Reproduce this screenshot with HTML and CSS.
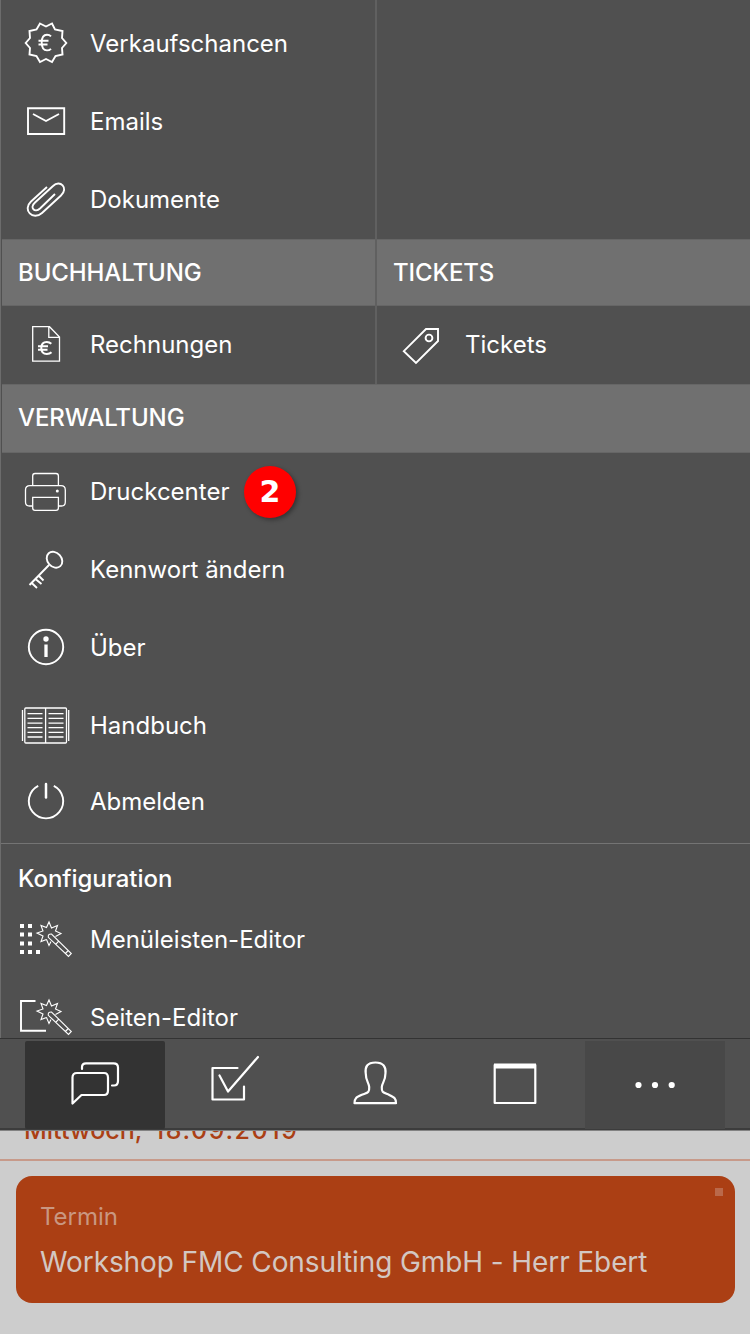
FILE: index.html
```html
<!DOCTYPE html>
<html lang="de">
<head>
<meta charset="utf-8">
<title>Menü</title>
<link rel="stylesheet" href="styles.css">
</head>
<body>
<div class="screen">
<main class="menu">
  <section class="columns top">
    <div class="column">
      <a class="row"><svg class="icon" viewBox="0 5 76 78"><path d="M40 23.5 L46 26.5 L52 23.5 L55 29.5 L62.5 31 L62 38 L66.300 43 L62 48 L62.500 54.500 L55.500 56 L52 62 L46 59 L40 62 L36.500 56 L29.500 54.500 L30 48 L25.700 43 L30 38 L29.500 31 L36.500 29.500Z"/><path d="M51 36.300C49.800 35 48.500 34.700 47 34.700C43.500 34.700 41.700 38 41.700 42.600C41.700 47.200 43.500 50.400 47 50.400C48.500 50.400 49.800 50 51 48.800M38.500 40.700H48.500M38.500 44.500H47.500"/></svg><span class="label">Verkaufschancen</span></a>
      <a class="row"><svg class="icon" viewBox="0 83 76 78"><path d="M28 108.300H64.200V134H28ZM33 114L46 121L59 114"/></svg><span class="label">Emails</span></a>
      <a class="row"><svg class="icon" viewBox="0 161 76 78"><path d="M47 187L31 201.500C22 210 33 221 42 213L61 195.500C69 188 60 179 53 186L35 202.500C29 208 35 213 40 208.500L55 194"/></svg><span class="label">Dokumente</span></a>
    </div>
    <div class="column"></div>
  </section>
  <section class="columns">
    <div class="column">
      <h2 class="heading">BUCHHALTUNG</h2>
      <a class="row"><svg class="icon thin" viewBox="0 306 76 78"><path d="M32.700 326.700H49.500L59.500 337V361.200H32.700ZM48.800 327V337.300H59"/><path class="bold" d="M51.300 343.800C50 342.500 48.500 342 46.800 342C43.300 342 41.300 344.500 41.300 348C41.300 351.500 43.300 354 46.800 354C48.500 354 50.200 353.600 51.500 352.300M38 346.200H48M38 349.700H47.500"/></svg><span class="label">Rechnungen</span></a>
    </div>
    <div class="column">
      <h2 class="heading">TICKETS</h2>
      <a class="row"><svg class="icon" viewBox="375 306 76 78"><path d="M426 329H438V341L416 363L403.800 351.200Z"/><circle cx="429" cy="338" r="3.400"/></svg><span class="label">Tickets</span></a>
    </div>
  </section>
  <section class="admin">
    <h2 class="heading">VERWALTUNG</h2>
    <a class="row"><svg class="icon thin" viewBox="0 453 76 78"><path d="M32.700 485.500V476Q32.700 473.500 35 473.500H56Q58.400 473.500 58.400 476V485.500M32 506H29.500Q25.500 506 25.500 502V490Q25.500 485.700 30 485.700H61Q65.300 485.700 65.300 490V502Q65.300 506 61.500 506H58.500M32.700 497.300H58.400V508Q58.400 510.400 56 510.400H35Q32.700 510.400 32.700 508Z"/><circle class="fill" cx="57.300" cy="491" r="1.500"/></svg><span class="label druck">Druckcenter</span><span class="step">2</span></a>
    <a class="row"><svg class="icon" viewBox="0 531 76 78"><ellipse cx="54.500" cy="559.700" rx="7" ry="8.700" transform="rotate(-42 54.500 559.700)"/><path d="M49 565L29.500 585M31.500 582.800L37 588M35.500 579L41.500 584M38.500 575.500L43.500 580.500"/></svg><span class="label">Kennwort ändern</span></a>
    <a class="row"><svg class="icon" viewBox="0 609 76 78"><circle cx="46" cy="647" r="17.200"/><circle class="fill" cx="46" cy="639" r="2.700"/><path class="heavy" d="M46 644.500V657"/></svg><span class="label">Über</span></a>
    <a class="row"><svg class="icon thin" viewBox="0 687 76 78"><path d="M22.500 710V741M68.700 710V741"/><rect x="24.800" y="708" width="41.700" height="35" rx="1"/><path d="M45.600 708V743M27.500 713.700H42.500M27.500 718.300H42.500M27.500 723.200H42.500M27.500 727.700H42.500M27.500 732.300H42.500M27.500 737H42.500M48.500 713.700H63.500M48.500 718.300H63.500M48.500 723.200H63.500M48.500 727.700H63.500M48.500 732.300H63.500M48.500 737H63.500"/></svg><span class="label">Handbuch</span></a>
    <a class="row"><svg class="icon" viewBox="0 764 76 78"><path d="M38.200 786.800A17.200 17.200 0 1 0 53.800 786.800"/><path class="medium" d="M46 785V798.500"/></svg><span class="label">Abmelden</span></a>
  </section>
  <section class="config">
    <h3 class="subheading">Konfiguration</h3>
    <a class="row"><svg class="icon" viewBox="0 901 76 78"><path class="dots" d="M20 926H24M28 926H32M20 934.500H24M28 934.500H32M20 943.500H24M28 943.500H32M20 952H24M28 952H32M36 952H40"/><g class="wand"><path d="M46.500 939.500L41 941.500L43 936L37 933L43 931L41 925.500L46.500 927.500L49 922L51.500 928L57.500 925.500L55.500 931L61 933.500L55.500 936.500M46.500 939.500L49 945.500L51 941.500"/><path d="M48.300 937.300Q47.800 933.800 51.500 934L71.300 953.500L68.500 956.500ZM55.500 944.500L58.500 941.300M65.300 953.500L68.300 950.500"/></g></svg><span class="label">Menüleisten-Editor</span></a>
    <a class="row"><svg class="icon" viewBox="0 979 76 78"><path d="M35.500 1001H21V1030.800H46"/><g class="wand" transform="translate(0 78)"><path d="M46.500 939.500L41 941.500L43 936L37 933L43 931L41 925.500L46.500 927.500L49 922L51.500 928L57.500 925.500L55.500 931L61 933.500L55.500 936.500M46.500 939.500L49 945.500L51 941.500"/><path d="M48.300 937.300Q47.800 933.800 51.500 934L71.300 953.500L68.500 956.500ZM55.500 944.500L58.500 941.300M65.300 953.500L68.300 950.500"/></g></svg><span class="label">Seiten-Editor</span></a>
  </section>
</main>
<nav class="tabs">
  <a class="tab selected"><svg viewBox="25 1041 140 88"><path d="M82 1069V1067Q82 1063.300 86 1063.300H113.500Q118 1063.300 118 1067.500V1081Q118 1085.500 114 1085.500H112M77 1073H104Q108 1073 108 1077.500V1090.500Q108 1095 104 1095H81.500L72.500 1103.500V1077.500Q72.500 1073 77 1073Z"/></svg></a>
  <a class="tab"><svg viewBox="165 1041 140 88"><path d="M237.500 1068H212.500V1099.500H244V1086.500M219.500 1075.500L228 1091.500L258 1057"/></svg></a>
  <a class="tab"><svg viewBox="305 1041 140 88"><path d="M375.500 1062.500C367 1062.500 365 1067 365.700 1073C365.700 1081 369 1083 369.200 1087C369.500 1093 367.500 1092.500 362.500 1094.500C356 1097.500 354.500 1098 354.500 1103.200H396C396 1098 394.500 1097.500 388.500 1094.500C383 1092.500 381.500 1092.500 381.800 1087C382 1083 385.500 1081 385.500 1073C386 1067 383.500 1062.500 375.500 1062.500Z"/></svg></a>
  <a class="tab"><svg viewBox="445 1041 140 88"><path d="M494.700 1065H535.300V1103H494.700Z"/><path class="bar" d="M494 1066H536"/></svg></a>
  <a class="tab more"><svg viewBox="585 1041 140 88"><g class="fill"><circle cx="638.500" cy="1085" r="3.100"/><circle cx="655" cy="1085" r="3.100"/><circle cx="671.700" cy="1085" r="3.100"/></g></svg></a>
</nav>
<section class="agenda">
  <h3 class="date"><span>Mittwoch, <b>18.09.2019</b></span></h3>
  <article class="event">
    <i class="marker"></i>
    <p class="kind">Termin</p>
    <p class="title">Workshop FMC Consulting GmbH - Herr Ebert</p>
  </article>
</section>
</div>
</body>
</html>
```
FILE: styles.css
```css
* { box-sizing: border-box; }
body { margin: 0; font-family: Inter, "Liberation Sans", sans-serif; color: #fff; background: #cdcdcd; }
h2, h3, p { margin: 0; }
.screen { width: 750px; height: 1334px; overflow: hidden; display: flex; flex-direction: column; }
.menu { height: 1038px; flex: none; overflow: hidden; background: #505050; border-left: 1px solid #6c6c6c; }
.columns { display: grid; grid-template-columns: 374px 375px; }
.top { height: 239px; }
.top .column { padding-top: 5px; }
.column + .column { border-left: 2px solid #606060; }
.row { display: flex; align-items: center; height: 78px; margin-left: -1px; }
.column + .column .row { margin-left: -2px; }
.icon { width: 76px; height: 78px; flex: none; margin-right: 14px; }
svg { display: block; fill: none; stroke: #fff; stroke-width: 1.9; }
.thin { stroke-width: 1.3; }
.bold { stroke-width: 2; }
.heavy { stroke-width: 3.3; }
.medium { stroke-width: 2.5; stroke-linecap: round; }
.fill { fill: #fff; stroke: none; }
.dots { stroke-width: 4; }
.wand { stroke-width: 1.1; }
.label { font-size: 24px; font-weight: 400; line-height: 30px; letter-spacing: 0; white-space: nowrap; }
.druck { width: 139px; }
.heading { height: 67px; margin-left: 1px; padding-left: 16px; background: #707070; border-top: 1px solid #666; border-bottom: 1px solid #666; font-size: 24px; font-weight: 500; line-height: 66px; letter-spacing: -.1px; }
.column + .column .heading { margin-left: 0; }
.admin { height: 460px; border-bottom: 1px solid #747474; }
.admin .heading { height: 69px; }
.admin .row:last-child { height: 74px; }
.step { width: 52px; height: 52px; margin-left: 15px; border-radius: 50%; background: #f00; box-shadow: 2px 2px 4px rgba(0,0,0,.35); font: bold 30px/52px "DejaVu Sans", sans-serif; text-align: center; }
.subheading { height: 57px; padding: 20px 0 0 17px; font-size: 24px; font-weight: 500; line-height: 30px; letter-spacing: -.05px; }
.tabs { height: 92px; flex: none; display: flex; padding: 2px 25px 0; background: #505050; border-top: 1px solid #333; border-bottom: 2px solid #3c3c3c; }
.tab { width: 140px; height: 88px; }
.selected { background: #333; border-radius: 2px; }
.more { background: #484848; }
.tab svg { width: 140px; height: 88px; stroke-width: 2.2; stroke-linejoin: round; stroke-linecap: round; }
.tab .bar { stroke-width: 5; stroke-linecap: butt; }
.agenda { flex: 1; background: #cdcdcd; }
.date { height: 31px; overflow: hidden; border-top: 1px solid #828282; border-bottom: 2px solid #c79a8a; color: #ab3f14; font-size: 25px; font-weight: 500; line-height: 32px; padding-left: 24px; }
.date span { display: block; margin-top: -17px; }
.date b { margin-left: 5px; font-weight: inherit; letter-spacing: 1.6px; }
.event { position: relative; height: 127px; margin: 15px 15.500px 0; padding: 26px 24.500px 0; border-radius: 16px; background: #ab3f14; }
.marker { position: absolute; top: 12px; right: 12px; width: 8px; height: 8px; background: #ba694a; }
.kind { color: #c99781; font-size: 24px; font-weight: 400; line-height: 30px; letter-spacing: 0; }
.title { color: #d3c7c2; font-size: 28px; font-weight: 400; line-height: 34px; margin-top: 13px; letter-spacing: -.1px; white-space: nowrap; }
```
